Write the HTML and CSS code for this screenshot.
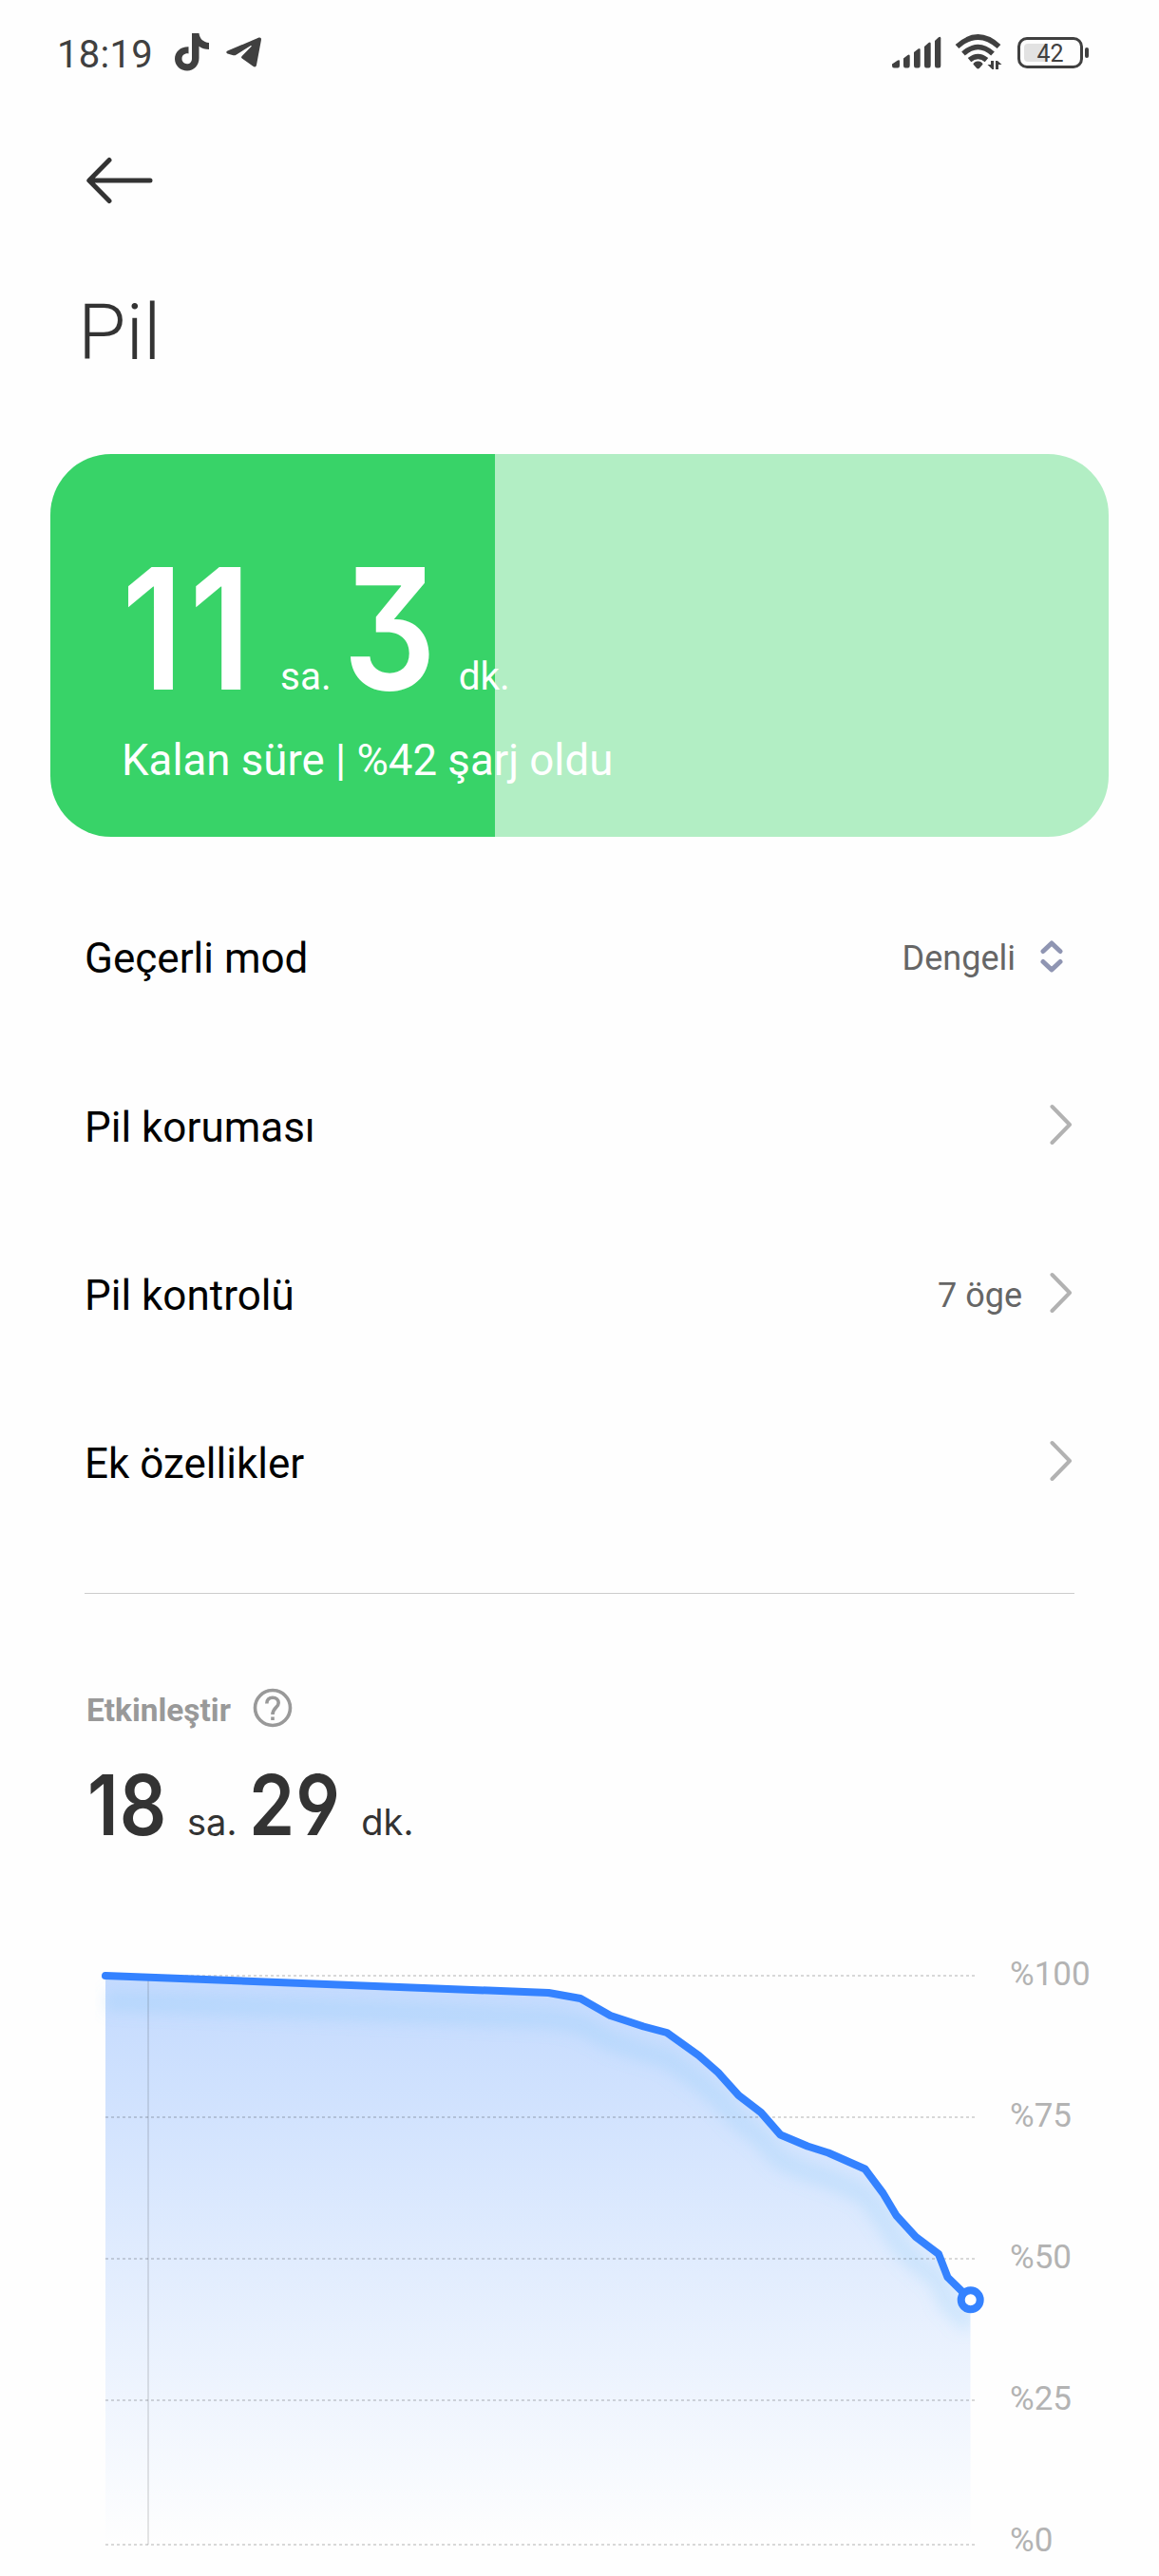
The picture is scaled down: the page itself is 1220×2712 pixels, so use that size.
FILE: index.html
```html
<!DOCTYPE html>
<html lang="tr">
  <head>
    <meta charset="utf-8">
    <title>Pil</title>
    <link rel="stylesheet" href="styles.css">
  </head>
  <body>
    <div class="status-bar">
      <span class="clock">18:19</span>
      <svg class="tiktok" width="36" height="40" viewBox="0 0 36 40">
        <path d="M18 0h7.500c.5 5.500 4.500 9.500 10.500 10v7c-4 0-7.500-1.200-10.500-3.300V26c0 8-5.500 13.500-12.500 13.500S0 34 0 27c0-7.500 6-13 14.500-12.800v7.200c-4-.6-7 1.800-7 5.400 0 3.200 2.400 5.400 5.300 5.400 3.200 0 5.200-2.300 5.200-5.800z"/>
      </svg>
      <svg class="telegram" width="38" height="32" viewBox="0 0 38 32">
        <path d="M1.500 14.500 34 .8c2-.8 3.300.2 2.900 2.400L32 29.500c-.4 2-1.900 2.400-3.600 1.300L16.800 22.500c-1-.8-1-1.700-.1-2.600l9.800-10c.5-.7-.2-1-.9-.6L10.500 18.800c-1 .6-2 .7-3 .4L1.500 17.400C-.2 16.800-.2 15.300 1.500 14.500z"/>
      </svg>
      <div class="status-icons">
        <svg class="signal" width="52" height="34" viewBox="0 0 52 34">
          <path d="M0 29.500 6 25.500q2-1 2 .8V31q0 2.500-2 2.500H2Q0 33.500 0 31z"/>
          <path d="M12 23.500 16.500 20q2.200-1.500 2.200 1V31q0 2.500-2 2.500h-2.700q-2 0-2-2.500z"/>
          <path d="M23 17 27.500 13.500q2.200-1.500 2.200 1V31q0 2.500-2 2.500H25q-2 0-2-2.500z"/>
          <path d="M34 11 38.500 7q2.200-1.500 2.200 1V31q0 2.500-2 2.500H36q-2 0-2-2.500z"/>
          <path d="M45 5 49 1.200q2.300-1.500 2.300 1V31q0 2.500-2 2.500H47q-2 0-2-2.500z"/>
        </svg>
        <svg class="wifi" width="50" height="38" viewBox="0 0 50 38">
          <g class="waves">
            <path d="M2.500 13Q24.500-7 46.500 13"/>
            <path d="M9 20.500Q24.500 6.500 40 20.500"/>
            <path d="M15.500 27.200Q24.500 19.800 33.500 27.200"/>
          </g>
          <path d="M24.500 28.500c2.500 0 5 1.500 5 3.200L26 35.800q-1.500 1.500-3 0l-3.500-4.100c0-1.700 2.500-3.200 5-3.200z"/>
          <path d="M38 28h3v9h-1.500L34.500 32H38zM43 37h3v-5h3.500L45 28h-2z"/>
        </svg>
        <div class="battery"><div class="battery-level"></div><span>42</span></div>
        <div class="battery-tip"></div>
      </div>
    </div>

    <svg class="back" width="70" height="50" viewBox="0 0 70 50">
      <path d="M24 3.500 2.800 25 24 46.500M3 25H67"/>
    </svg>

    <h1>Pil</h1>

    <div class="battery-card">
      <div class="time">
        <span class="num hours">11</span>
        <span class="unit">sa.</span>
        <span class="num minutes">3</span>
        <span class="unit">dk.</span>
      </div>
      <p>Kalan süre | %42 şarj oldu</p>
    </div>

    <div class="list">
      <div class="row">
        <span class="label">Geçerli mod</span>
        <span class="value">Dengeli</span>
        <svg class="sort" width="24" height="36" viewBox="0 0 24 36">
          <path d="M3 12.500 12 4l9 8.500M3 23.500 12 32l9-8.500"/>
        </svg>
      </div>
      <div class="row">
        <span class="label">Pil koruması</span>
        <svg class="chevron" width="24" height="44" viewBox="0 0 24 44"><path d="M2.500 3 21 22 2.500 41"/></svg>
      </div>
      <div class="row">
        <span class="label">Pil kontrolü</span>
        <span class="value">7 öge</span>
        <svg class="chevron" width="24" height="44" viewBox="0 0 24 44"><path d="M2.500 3 21 22 2.500 41"/></svg>
      </div>
      <div class="row">
        <span class="label">Ek özellikler</span>
        <svg class="chevron" width="24" height="44" viewBox="0 0 24 44"><path d="M2.500 3 21 22 2.500 41"/></svg>
      </div>
    </div>

    <div class="usage">
      <div class="usage-title">
        <span>Etkinleştir</span>
        <svg width="42" height="42" viewBox="0 0 42 42">
          <circle cx="21" cy="21" r="18.500"/>
          <path d="M14.800 16.500c0-4 2.500-6.300 6.200-6.300s6.200 2.300 6.200 5.600c0 5-6.200 5-6.200 12.200M21 30.500v3.500"/>
        </svg>
      </div>
      <div class="usage-time">
        <span class="num hours">18</span>
        <span class="unit">sa.</span>
        <span class="num minutes">29</span>
        <span class="unit">dk.</span>
      </div>
    </div>

    <svg class="chart" width="1220" height="672" viewBox="0 2040 1220 672">
      <defs>
        <linearGradient id="fill" x1="0" y1="2080" x2="0" y2="2679" gradientUnits="userSpaceOnUse">
          <stop offset="0" stop-color="#3482ff" stop-opacity="0.29"/>
          <stop offset="1" stop-color="#3482ff" stop-opacity="0"/>
        </linearGradient>
        <filter id="blur" x="-10%" y="-20%" width="120%" height="140%">
          <feGaussianBlur stdDeviation="8"/>
        </filter>
        <clipPath id="under">
          <path d="M100 2080H111L577.500 2098 611 2104 642.500 2122 677.500 2133.500 702 2140 735.500 2164 756 2182 777.500 2206 801 2224 821.500 2247.500 850 2259.500 872 2266.500 910.500 2283.500 929.500 2309 943.500 2332.500 964 2355 988 2373 997.500 2397.500 1021.500 2421V2679H100z"/>
        </clipPath>
      </defs>
      <path class="area" d="M111 2080 577.500 2098 611 2104 642.500 2122 677.500 2133.500 702 2140 735.500 2164 756 2182 777.500 2206 801 2224 821.500 2247.500 850 2259.500 872 2266.500 910.500 2283.500 929.500 2309 943.500 2332.500 964 2355 988 2373 997.500 2397.500 1021.500 2421V2679H111z"/>
      <g clip-path="url(#under)">
        <path class="shadow" transform="translate(0 27)" d="M111 2080 577.500 2098 611 2104 642.500 2122 677.500 2133.500 702 2140 735.500 2164 756 2182 777.500 2206 801 2224 821.500 2247.500 850 2259.500 872 2266.500 910.500 2283.500 929.500 2309 943.500 2332.500 964 2355 988 2373 997.500 2397.500 1021.500 2421"/>
      </g>
      <g class="grid">
        <path d="M111 2080H1026"/>
        <path d="M111 2229H1026"/>
        <path d="M111 2378H1026"/>
        <path d="M111 2527H1026"/>
        <path d="M111 2679H1026"/>
      </g>
      <path class="day" d="M156 2080V2679"/>
      <path class="line" d="M111 2080 577.500 2098 611 2104 642.500 2122 677.500 2133.500 702 2140 735.500 2164 756 2182 777.500 2206 801 2224 821.500 2247.500 850 2259.500 872 2266.500 910.500 2283.500 929.500 2309 943.500 2332.500 964 2355 988 2373 997.500 2397.500 1021.500 2421"/>
      <circle class="dot" cx="1021.700" cy="2421.300" r="10"/>
      <g class="axis">
        <text x="1063" y="2090">%100</text>
        <text x="1063" y="2239">%75</text>
        <text x="1063" y="2388">%50</text>
        <text x="1063" y="2537">%25</text>
        <text x="1063" y="2686">%0</text>
      </g>
    </svg>
  </body>
</html>
```
FILE: styles.css
```css
* {
  box-sizing: border-box;
}

body {
  margin: 0;
  width: 1220px;
  height: 2712px;
  overflow: hidden;
  font-family: Roboto, "Noto Sans", sans-serif;
  background-color: #fefefe;
  color: #333;
}

svg {
  display: block;
  flex-shrink: 0;
}

.status-bar {
  display: flex;
  align-items: center;
  height: 110px;
  padding: 0 74px 0 60px;
  fill: #404040;
  color: #404040;
}
.clock {
  width: 124px;
  font-size: 40px;
  font-weight: 450;
  letter-spacing: 0.3px;
  line-height: 48px;
  margin-top: 5px;
}
.telegram {
  margin-left: 18px;
}
.status-icons {
  display: flex;
  align-items: center;
  margin-left: auto;
}
.wifi {
  margin-left: 14px;
}
.waves {
  fill: none;
  stroke: #404040;
  stroke-width: 5.500;
}
.battery {
  position: relative;
  width: 69px;
  height: 33px;
  margin-left: 16px;
  border: 3px solid #404040;
  border-radius: 10px;
  font-size: 25px;
  line-height: 29px;
  text-align: center;
}
.battery span {
  position: relative;
}
.battery-level {
  position: absolute;
  left: 4px;
  top: 4px;
  width: 23px;
  height: 19px;
  border-radius: 4px 0 0 4px;
  background-color: #e2e2e2;
}
.battery-tip {
  width: 4px;
  height: 11px;
  margin-left: 2px;
  border-radius: 2px;
  background-color: #404040;
}

.back {
  margin: 55px 0 0 91px;
  fill: none;
  stroke: #333;
  stroke-width: 5;
  stroke-linecap: round;
  stroke-linejoin: round;
}

h1 {
  margin: 85px 0 0 82px;
  font-size: 82px;
  font-weight: 300;
  line-height: 100px;
}

.battery-card {
  width: 1114px;
  height: 403px;
  margin: 78px 0 0 53px;
  padding: 94px 0 0 75px;
  border-radius: 64px;
  background: linear-gradient(to right, #38d368 468px, #b2eec4 468px);
  color: #fff;
}
.time,
.usage-time {
  display: flex;
  align-items: baseline;
}
.num {
  font-family: Inter, sans-serif;
  font-feature-settings: "cv09", "cv04";
  transform-origin: left;
  white-space: nowrap;
}
.time .num {
  font-size: 177px;
  font-weight: 600;
  line-height: 180px;
  transform: scaleX(0.87);
}
.time .hours {
  width: 167px;
  letter-spacing: 7px;
}
.time .minutes {
  width: 122px;
  margin-left: 12px;
}
.time .unit {
  font-size: 40.5px;
  line-height: 50px;
}
.battery-card p {
  margin: 19px 0 0;
  font-size: 45.6px;
  line-height: 60px;
}

.list {
  margin: 39px 89px 0;
  padding-bottom: 48px;
  border-bottom: 1px solid #ccc;
}
.row {
  display: flex;
  align-items: center;
  height: 177px;
}
.row:first-child {
  height: 178px;
}
.label {
  flex: 1;
  font-size: 44px;
  color: #000;
}
.value {
  font-size: 36px;
  color: #666;
}
.chevron {
  margin: 0 2px 5px 29px;
  fill: none;
  stroke: #b2b2b2;
  stroke-width: 4;
  stroke-linecap: round;
  stroke-linejoin: round;
}
.sort {
  margin: 0 12px 5px 26px;
  fill: none;
  stroke: #8f95b2;
  stroke-width: 5;
  stroke-linecap: round;
  stroke-linejoin: round;
}

.usage {
  height: 362px;
  padding: 102px 0 0 91px;
}
.usage-title {
  display: flex;
  align-items: center;
  height: 40px;
  color: #999;
  font-size: 33.4px;
  font-weight: 700;
}
.usage-title svg {
  margin: 0 0 4px 23px;
  fill: none;
  stroke: #999;
  stroke-width: 3.6;
}
.usage-time {
  margin-top: 35px;
  padding-left: 1px;
}
.usage-time .num {
  font-size: 88px;
  font-weight: 600;
  line-height: 90px;
  letter-spacing: 1px;
  transform: scaleX(0.88);
}
.usage-time .hours {
  width: 105px;
}
.usage-time .minutes {
  width: 118px;
  margin-left: 13px;
}
.usage-time .unit {
  font-family: Inter, sans-serif;
  font-size: 38px;
  line-height: 50px;
}

.area {
  fill: url(#fill);
}
.shadow {
  fill: none;
  stroke: #7cc4f8;
  stroke-opacity: 0.22;
  stroke-width: 20;
  filter: url(#blur);
}
.grid {
  stroke: rgba(0, 0, 0, 0.15);
  stroke-width: 2;
  stroke-dasharray: 3 3;
}
.day {
  stroke: rgba(0, 0, 0, 0.1);
  stroke-width: 2;
}
.line {
  fill: none;
  stroke: #3482ff;
  stroke-width: 8;
  stroke-linecap: round;
  stroke-linejoin: round;
}
.dot {
  fill: #fff;
  stroke: #3482ff;
  stroke-width: 8;
}
.axis {
  fill: #b3b3b3;
  font-size: 35px;
}
```
